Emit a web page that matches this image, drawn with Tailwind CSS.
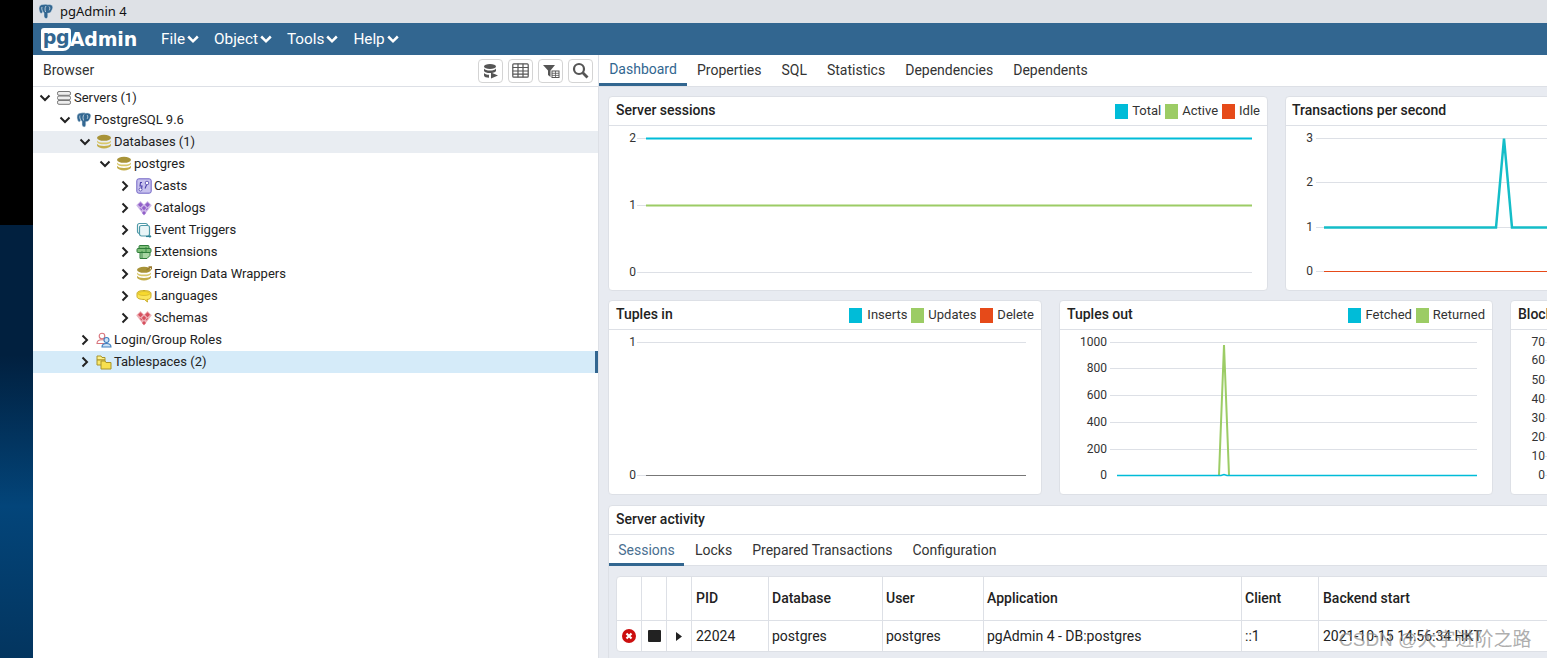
<!DOCTYPE html>
<html lang="en">
<head>
  <meta charset="UTF-8" />
  <title>pgAdmin 4</title>
  <script src="https://cdn.jsdelivr.net/npm/@tailwindcss/browser@4"></script>
</head>
<body class="w-[1547px] h-[658px] overflow-hidden flex bg-white text-[#222] text-[13px] [font-family:Roboto,sans-serif]">
  <!-- shared icons -->
  <svg class="hidden">
    <symbol id="elephant" viewBox="0 0 16 16">
      <path d="M5 1C2.500 1 .8 2.600 1 5.200c.1 1.800.8 4 1.800 4.600.9.5 1.500-.6 2-1.600.4.6.7.9 1.200 1v3.300c0 1.300.9 2.500 2.200 2.500 1.200 0 1.600-1 1.600-2.200V9.600c1.200.4 2.600-.3 3.400-1.600C14.600 5.700 15.300 3.700 14.500 2.500 13.700 1.300 11.500 .7 9.800 1.200 8.600 .7 6.600 .8 5 1Z" fill="#336791" stroke="#dbe6ee" stroke-width=".5"/>
      <path d="M8 2.500C6.800 4 6.800 6.500 7.600 8.500M11 3c1 1 1 2.500.2 3.800M4 3.500c-.6 1.500 0 3.300.8 4.700" fill="none" stroke="#dbe6ee" stroke-width=".8"/>
    </symbol>
    <symbol id="db" viewBox="0 0 16 16">
      <ellipse cx="8" cy="3.800" rx="7" ry="3" fill="#a89338"/>
      <path d="M1 6.400c1 1.700 3.700 2.200 7 2.200s6-.5 7-2.200v1.400c-.6 1.900-3.600 2.500-7 2.500S1.600 9.700 1 7.800Z" fill="#d9c869"/>
      <path d="M1 9.800c1 1.700 3.700 2.200 7 2.200s6-.5 7-2.200v1.800c-.6 1.900-3.600 2.800-7 2.800s-6.400-.9-7-2.800Z" fill="#c4ae4a"/>
    </symbol>
    <symbol id="down" viewBox="0 0 12 12"><path d="M1.500 3.500L6 8l4.500-4.500" fill="none" stroke="#222" stroke-width="2"/></symbol>
    <symbol id="right" viewBox="0 0 12 12"><path d="M3.500 1.500L8 6l-4.500 4.500" fill="none" stroke="#222" stroke-width="2"/></symbol>
    <symbol id="menu-down" viewBox="0 0 12 12"><path d="M1.200 3.500L6 8.300l4.800-4.800" fill="none" stroke="#fff" stroke-width="2.500"/></symbol>
    <symbol id="diamonds" viewBox="0 0 16 16">
      <path d="M4.500 1L8 4.500 11.500 1 15.800 5.300 8 15.500.2 5.300Z" fill="currentColor" opacity=".45"/>
      <path d="M4.500 2.200L7 4.700 4.500 7.200 2 4.700ZM11.500 2.200L14 4.700 11.500 7.200 9 4.700ZM8 5.700L10.300 8 8 10.300 5.700 8ZM4.700 8.200L6.300 9.800 5.700 10.500 3.600 8.600ZM11.300 8.200L9.700 9.800 10.300 10.500 12.400 8.600ZM8 11L10 13 8 15 6 13Z" fill="currentColor"/>
    </symbol>
  </svg>

  <!-- desktop wallpaper strip -->
  <div class="w-[33px] shrink-0 flex flex-col">
    <div class="h-[225px] bg-black"></div>
    <div class="flex-1 bg-linear-to-b from-[#01203f] from-30% via-[#03457a] via-65% to-[#03355f]"></div>
  </div>

  <div class="flex-1 min-w-0 flex flex-col">
    <!-- window title -->
    <div class="h-[23px] bg-[#dee1e6] flex items-center pl-[5px] gap-[6px] text-[13px] text-[#111] [font-family:'Noto_Sans',sans-serif]">
      <svg class="w-[16px] h-[17px]"><use href="#elephant"/></svg>
      <span>pgAdmin 4</span>
    </div>

    <!-- navbar -->
    <div class="h-[32px] bg-[#326690] flex items-center text-white text-[15.3px]">
      <div class="ml-[8px] w-[96px] flex items-center [font-family:'DejaVu_Sans',sans-serif] font-bold text-[19px] leading-none">
        <span class="h-[23px] w-[30px] bg-white rounded-[3px] rounded-br-[8px] text-[#326690] flex items-center justify-center pb-[3px] tracking-[-.5px]">pg</span>
        <span class="ml-[-1px] tracking-[-.2px]">Admin</span>
      </div>
      <div class="ml-[24px] flex gap-[15px]">
        <span class="flex items-center gap-[2px]">File<svg class="w-[12px] h-[12px]"><use href="#menu-down"/></svg></span>
        <span class="flex items-center gap-[2px]">Object<svg class="w-[12px] h-[12px]"><use href="#menu-down"/></svg></span>
        <span class="flex items-center gap-[2px]">Tools<svg class="w-[12px] h-[12px]"><use href="#menu-down"/></svg></span>
        <span class="flex items-center gap-[2px]">Help<svg class="w-[12px] h-[12px]"><use href="#menu-down"/></svg></span>
      </div>
    </div>

    <div class="flex-1 min-h-0 flex">
      <!-- browser panel -->
      <div class="w-[566px] shrink-0 border-r border-[#dde0e6] flex flex-col">
        <div class="h-[32px] border-b border-[#dde0e6] flex items-center pl-[10px] pr-[5px] text-[14px] text-[#333]">
          <span class="flex-1">Browser</span>
          <div class="flex gap-[5px]">
            <span class="w-[25px] h-[24px] border border-[#d4d4d4] rounded-[4px] flex items-center justify-center">
              <svg class="w-[16px] h-[16px]" viewBox="0 0 16 16" fill="#555"><ellipse cx="7" cy="3.500" rx="6" ry="2.500"/><path d="M1 5.500c1 1.500 3 2 6 2s5-.5 6-2V8c-1 1.500-3 2-6 2s-5-.5-6-2ZM1 10c1 1.200 2.500 1.700 5 1.800v3C3.500 14.700 1 14 1 12.500Z"/><path d="M8 9.500L15 12.500 8 15.500Z"/></svg>
            </span>
            <span class="w-[25px] h-[24px] border border-[#d4d4d4] rounded-[4px] flex items-center justify-center">
              <svg class="w-[17px] h-[15px]" viewBox="0 0 17 15" fill="none" stroke="#555" stroke-width="1.200"><rect x=".8" y=".8" width="15.400" height="13.400" rx="1"/><path d="M.8 4.500h15.400M.8 8h15.400M.8 11.200h15.400M6 .8v13.400M11 .8v13.400"/></svg>
            </span>
            <span class="w-[25px] h-[24px] border border-[#d4d4d4] rounded-[4px] flex items-center justify-center">
              <svg class="w-[18px] h-[16px]" viewBox="0 0 18 16"><path d="M1 2h12L8.500 7.500V14L6 12V7.500Z" fill="#555"/><rect x="10" y="8" width="7" height="6.500" fill="#fff" stroke="#555"/><path d="M10 10.300h7M10 12.400h7M13.500 8v6.500" stroke="#555" stroke-width=".8"/></svg>
            </span>
            <span class="w-[25px] h-[24px] border border-[#d4d4d4] rounded-[4px] flex items-center justify-center">
              <svg class="w-[17px] h-[17px]" viewBox="0 0 17 17" fill="none" stroke="#555"><circle cx="7" cy="7" r="5" stroke-width="2.200"/><path d="M10.800 10.800L15.500 15.500" stroke-width="2.800"/></svg>
            </span>
          </div>
        </div>

        <!-- tree -->
        <div class="flex-1">
          <div class="h-[22px] flex items-center gap-[2px] pl-[6px]">
            <svg class="w-[12px] h-[12px] mr-[3px]"><use href="#down"/></svg>
            <svg class="w-[16px] h-[16px]" viewBox="0 0 16 16" fill="#eee" stroke="#777"><rect x="1.500" y="1.500" width="13" height="3.800" rx="1.500"/><rect x="1.500" y="6" width="13" height="3.800" rx="1.500"/><rect x="1.500" y="10.500" width="13" height="3.800" rx="1.500"/></svg>
            <span>Servers (1)</span>
          </div>
          <div class="h-[22px] flex items-center gap-[2px] pl-[26px]">
            <svg class="w-[12px] h-[12px] mr-[3px]"><use href="#down"/></svg>
            <svg class="w-[16px] h-[16px]"><use href="#elephant"/></svg>
            <span>PostgreSQL 9.6</span>
          </div>
          <div class="h-[22px] flex items-center gap-[2px] pl-[46px] bg-[#e9edf2]">
            <svg class="w-[12px] h-[12px] mr-[3px]"><use href="#down"/></svg>
            <svg class="w-[16px] h-[16px]"><use href="#db"/></svg>
            <span>Databases (1)</span>
          </div>
          <div class="h-[22px] flex items-center gap-[2px] pl-[66px]">
            <svg class="w-[12px] h-[12px] mr-[3px]"><use href="#down"/></svg>
            <svg class="w-[16px] h-[16px]"><use href="#db"/></svg>
            <span>postgres</span>
          </div>
          <div class="h-[22px] flex items-center gap-[2px] pl-[86px]">
            <svg class="w-[12px] h-[12px] mr-[3px]"><use href="#right"/></svg>
            <svg class="w-[16px] h-[16px]" viewBox="0 0 16 16"><rect x=".8" y=".8" width="14.400" height="14.400" rx="2" fill="#c8c2ee" stroke="#6f62c4"/><path d="M6 4.500H4.500L4 8h2l-.5 3M9 10.500l1.500-3.500" fill="none" stroke="#4a3fa8" stroke-width="1.100"/><circle cx="11" cy="5" r="1.800" fill="#fff" stroke="#4a3fa8" stroke-width=".8"/><circle cx="4.500" cy="11.500" r="1.500" fill="#fff" stroke="#4a3fa8" stroke-width=".8"/></svg>
            <span>Casts</span>
          </div>
          <div class="h-[22px] flex items-center gap-[2px] pl-[86px]">
            <svg class="w-[12px] h-[12px] mr-[3px]"><use href="#right"/></svg>
            <svg class="w-[16px] h-[16px] text-[#9160c9]"><use href="#diamonds"/></svg>
            <span>Catalogs</span>
          </div>
          <div class="h-[22px] flex items-center gap-[2px] pl-[86px]">
            <svg class="w-[12px] h-[12px] mr-[3px]"><use href="#right"/></svg>
            <svg class="w-[16px] h-[16px]" viewBox="0 0 16 16" fill="none" stroke="#4f9aa8" stroke-width="1.200"><rect x="1.500" y="1.500" width="10" height="10" rx="2"/><rect x="3.500" y="3.500" width="10" height="10.500" rx="2" fill="#e9f5f7"/><path d="M10 14.500h5" stroke="#2d8094"/><path d="M13.500 12.500l2 2-2 1.500Z" fill="#2d8094" stroke="none"/></svg>
            <span>Event Triggers</span>
          </div>
          <div class="h-[22px] flex items-center gap-[2px] pl-[86px]">
            <svg class="w-[12px] h-[12px] mr-[3px]"><use href="#right"/></svg>
            <svg class="w-[16px] h-[16px]" viewBox="0 0 16 16" fill="#7fbf7a" stroke="#2f7d3a"><rect x="3" y="1.500" width="10" height="4" rx="1"/><rect x="1" y="4.500" width="14" height="4" rx="1"/><path d="M4 8.500h10v3l-3 3H4Z" fill="#a9d6a3"/><path d="M6 7v7M10 3v5" stroke-width=".8"/></svg>
            <span>Extensions</span>
          </div>
          <div class="h-[22px] flex items-center gap-[2px] pl-[86px]">
            <svg class="w-[12px] h-[12px] mr-[3px]"><use href="#right"/></svg>
            <svg class="w-[16px] h-[16px]" viewBox="0 0 16 16"><use href="#db"/><path d="M10.500 4L15 .8M12.500 .8H15.500V3.500" fill="none" stroke="#9a7a30" stroke-width="1.200"/></svg>
            <span>Foreign Data Wrappers</span>
          </div>
          <div class="h-[22px] flex items-center gap-[2px] pl-[86px]">
            <svg class="w-[12px] h-[12px] mr-[3px]"><use href="#right"/></svg>
            <svg class="w-[16px] h-[16px]" viewBox="0 0 16 16"><path d="M8 2.500c3.800 0 7 1 7 3v3c0 2-2 3-4 3l.5 2.500-3-2.500C4 11.500 1 10.500 1 8.500v-3c0-2 3.200-3 7-3Z" fill="#fbe55a" stroke="#c9ab23"/><ellipse cx="8" cy="5.500" rx="6" ry="2" fill="#f7d92e" stroke="#c9ab23" stroke-width=".6"/></svg>
            <span>Languages</span>
          </div>
          <div class="h-[22px] flex items-center gap-[2px] pl-[86px]">
            <svg class="w-[12px] h-[12px] mr-[3px]"><use href="#right"/></svg>
            <svg class="w-[16px] h-[16px] text-[#d6515f]"><use href="#diamonds"/></svg>
            <span>Schemas</span>
          </div>
          <div class="h-[22px] flex items-center gap-[2px] pl-[46px]">
            <svg class="w-[12px] h-[12px] mr-[3px]"><use href="#right"/></svg>
            <svg class="w-[16px] h-[16px]" viewBox="0 0 16 16" fill="#fff"><circle cx="6" cy="4" r="2.800" stroke="#d8747c" stroke-width="1.100"/><path d="M1 11.500c0-2.500 2-3.800 5-3.800s5 1.300 5 3.800Z" stroke="#d8747c" stroke-width="1.100"/><circle cx="10.500" cy="8" r="2.500" fill="#cfe3f5" stroke="#3f7fc0" stroke-width="1.100"/><path d="M6 15c0-2.500 2-3.500 4.500-3.500S15 12.500 15 15Z" fill="#cfe3f5" stroke="#3f7fc0" stroke-width="1.100"/></svg>
            <span>Login/Group Roles</span>
          </div>
          <div class="h-[22px] flex items-center gap-[2px] pl-[46px] bg-[#d5ebf9] border-r-[3px] border-[#326690]">
            <svg class="w-[12px] h-[12px] mr-[3px]"><use href="#right"/></svg>
            <svg class="w-[16px] h-[16px]" viewBox="0 0 16 16" stroke="#a8942a"><path d="M1 2h4l1 1.500h3V6H1Z" fill="#fdf08a"/><path d="M1 6h8v5H1Z" fill="#fbe96b"/><path d="M5 7h4l1 1.500h5V15H5Z" fill="#f7e04e"/></svg>
            <span>Tablespaces (2)</span>
          </div>
        </div>
      </div>

      <!-- dashboard panel -->
      <div class="flex-1 min-w-0 flex flex-col overflow-hidden bg-[#e8ebf1]">
        <div class="h-[32px] shrink-0 bg-white border-b border-[#dde0e6] flex text-[14px] text-[#333]">
          <span class="w-[88px] h-[31px] border-b-[3px] border-[#326690] text-[#326690] flex items-center justify-center">Dashboard</span>
          <span class="flex items-center ml-[10px]">Properties</span>
          <span class="flex items-center ml-[20px]">SQL</span>
          <span class="flex items-center ml-[20px]">Statistics</span>
          <span class="flex items-center ml-[20px]">Dependencies</span>
          <span class="flex items-center ml-[20px]">Dependents</span>
        </div>

        <div class="flex-1 pl-[9px] pt-[9px] flex flex-col w-[1200px]">
          <!-- row 1 -->
          <div class="flex gap-[17px] w-[1100px]">
            <div class="w-[660px] h-[195px] shrink-0 bg-white border border-[#dde0e6] rounded-[4px]">
              <div class="h-[29px] border-b border-[#dde0e6] flex items-center px-[7px]">
                <span class="flex-1 mb-[2px] font-medium text-[14px]">Server sessions</span>
                <span class="flex items-center gap-[4px] text-[#333]"><i class="w-[13px] h-[15px] bg-[#00bcd8]"></i>Total</span>
                <span class="flex items-center gap-[4px] ml-[4px] text-[#333]"><i class="w-[13px] h-[15px] bg-[#9ccc65]"></i>Active</span>
                <span class="flex items-center gap-[4px] ml-[4px] text-[#333]"><i class="w-[13px] h-[15px] bg-[#e64a19]"></i>Idle</span>
              </div>
              <svg class="block" width="658" height="164" font-size="12" fill="#333">
                <path d="M28 12.500H643M28 79.500H643M28 146.500H643" stroke="#dde0e6"/>
                <text x="27" y="16" text-anchor="end">2</text><text x="27" y="83" text-anchor="end">1</text><text x="27" y="150" text-anchor="end">0</text>
                <path d="M37 12.500H643" stroke="#00bcd8" stroke-width="2"/>
                <path d="M37 79.500H643" stroke="#9ccc65" stroke-width="2"/>
              </svg>
            </div>
            <div class="w-[400px] h-[195px] shrink-0 bg-white border border-[#dde0e6] rounded-[4px]">
              <div class="h-[29px] border-b border-[#dde0e6] flex items-center px-[6px] pb-[2px]">
                <span class="font-medium text-[14px]">Transactions per second</span>
              </div>
              <svg class="block" width="398" height="164" font-size="12" fill="#333">
                <path d="M30 12.500H398M30 56.500H398M30 101.500H398M30 145.500H398" stroke="#dde0e6"/>
                <text x="27" y="16" text-anchor="end">3</text><text x="27" y="60" text-anchor="end">2</text><text x="27" y="105" text-anchor="end">1</text><text x="27" y="149" text-anchor="end">0</text>
                <path d="M38 145.500H398" stroke="#e64a19"/>
                <path d="M38 101.500H210L218 12.500 226 101.500H398" fill="none" stroke="#14bdc8" stroke-width="2.500"/>
              </svg>
            </div>
          </div>

          <!-- row 2 -->
          <div class="flex gap-[17px] w-[1100px] mt-[9px]">
            <div class="w-[434px] h-[195px] shrink-0 bg-white border border-[#dde0e6] rounded-[4px]">
              <div class="h-[29px] border-b border-[#dde0e6] flex items-center px-[7px]">
                <span class="flex-1 mb-[2px] font-medium text-[14px]">Tuples in</span>
                <span class="flex items-center gap-[5px] text-[#333]"><i class="w-[13px] h-[15px] bg-[#00bcd8]"></i>Inserts</span>
                <span class="flex items-center gap-[4px] ml-[4px] text-[#333]"><i class="w-[13px] h-[15px] bg-[#9ccc65]"></i>Updates</span>
                <span class="flex items-center gap-[4px] ml-[4px] text-[#333]"><i class="w-[13px] h-[15px] bg-[#e64a19]"></i>Delete</span>
              </div>
              <svg class="block" width="432" height="164" font-size="12" fill="#333">
                <path d="M28 12.500H417M28 145.500H37" stroke="#dde0e6"/>
                <text x="27" y="16" text-anchor="end">1</text><text x="27" y="149" text-anchor="end">0</text>
                <path d="M37 145.500H417" stroke="#777"/>
              </svg>
            </div>
            <div class="w-[434px] h-[195px] shrink-0 bg-white border border-[#dde0e6] rounded-[4px]">
              <div class="h-[29px] border-b border-[#dde0e6] flex items-center px-[7px]">
                <span class="flex-1 mb-[2px] font-medium text-[14px]">Tuples out</span>
                <span class="flex items-center gap-[4px] text-[#333]"><i class="w-[13px] h-[15px] bg-[#00bcd8]"></i>Fetched</span>
                <span class="flex items-center gap-[4px] ml-[4px] text-[#333]"><i class="w-[13px] h-[15px] bg-[#9ccc65]"></i>Returned</span>
              </div>
              <svg class="block" width="432" height="164" font-size="12" fill="#333">
                <path d="M50 12.500H417M50 38.500H417M50 65.500H417M50 92.500H417M50 119.500H417" stroke="#dde0e6"/>
                <g text-anchor="end"><text x="47" y="16">1000</text><text x="47" y="42">800</text><text x="47" y="69">600</text><text x="47" y="96">400</text><text x="47" y="123">200</text><text x="47" y="149">0</text></g>
                <path d="M159 145L164 15 169 145" fill="none" stroke="#9ccc65" stroke-width="2"/>
                <path d="M57 145.500H161L164 144.500 167 145.500H417" fill="none" stroke="#00bcd8" stroke-width="1.500"/>
              </svg>
            </div>
            <div class="w-[200px] h-[195px] shrink-0 bg-white border border-[#dde0e6] rounded-[4px]">
              <div class="h-[29px] border-b border-[#dde0e6] flex items-center px-[7px] pb-[2px]">
                <span class="font-medium text-[14px]">Block I/O</span>
              </div>
              <svg class="block" width="198" height="164" font-size="12" fill="#333">
                <g text-anchor="end"><text x="34" y="16">70</text><text x="34" y="34">60</text><text x="34" y="54">50</text><text x="34" y="73">40</text><text x="34" y="92">30</text><text x="34" y="111">20</text><text x="34" y="130">10</text><text x="34" y="149">0</text></g>
                <path d="M34 12.500H40M34 30.500H40M34 50.500H40M34 69.500H40M34 88.500H40M34 107.500H40M34 126.500H40M34 145.500H40" stroke="#dde0e6"/>
              </svg>
            </div>
          </div>

          <!-- server activity -->
          <div class="w-[1100px] h-[200px] mt-[10px] shrink-0 bg-white border border-[#dde0e6] rounded-[4px]">
            <div class="h-[29px] border-b border-[#dde0e6] flex items-center px-[7px] pb-[2px] font-medium text-[14px]">Server activity</div>
            <div class="h-[31px] pt-[1px] border-b border-[#dde0e6] flex text-[14px] text-[#333]">
              <span class="w-[75px] h-[30px] pt-[2px] border-b-[3px] border-[#326690] text-[#4a6f90] flex items-center justify-center">Sessions</span>
              <span class="flex items-center ml-[11px]">Locks</span>
              <span class="flex items-center ml-[20px]">Prepared Transactions</span>
              <span class="flex items-center ml-[20px]">Configuration</span>
            </div>
            <div class="bg-[#e8ebf1] pl-[7px] pr-[8px] pt-[10px] pb-[6px]">
              <div class="bg-white rounded-[4px] border border-[#dde0e6] text-[14px]">
                <div class="h-[44px] border-b border-[#dde0e6] grid grid-cols-[25px_25px_25px_77px_114px_101px_258px_77px_1fr] items-stretch font-medium">
                  <span class="border-r border-[#dde0e6]"></span>
                  <span class="border-r border-[#dde0e6]"></span>
                  <span class="border-r border-[#dde0e6]"></span>
                  <span class="border-r border-[#dde0e6] pl-[4px] flex items-center">PID</span>
                  <span class="border-r border-[#dde0e6] pl-[3px] flex items-center">Database</span>
                  <span class="border-r border-[#dde0e6] pl-[3px] flex items-center">User</span>
                  <span class="border-r border-[#dde0e6] pl-[3px] flex items-center">Application</span>
                  <span class="border-r border-[#dde0e6] pl-[3px] flex items-center">Client</span>
                  <span class="pl-[4px] flex items-center">Backend start</span>
                </div>
                <div class="h-[30px] grid grid-cols-[25px_25px_25px_77px_114px_101px_258px_77px_1fr] items-stretch">
                  <span class="border-r border-[#dde0e6] flex items-center justify-center">
                    <svg class="w-[14px] h-[14px]" viewBox="0 0 14 14"><circle cx="7" cy="7" r="7" fill="#cc0f0f"/><path d="M4.500 4.500l5 5M9.500 4.500l-5 5" stroke="#fff" stroke-width="2.200"/></svg>
                  </span>
                  <span class="border-r border-[#dde0e6] flex items-center justify-center"><i class="w-[13px] h-[12px] bg-[#222] rounded-[1px]"></i></span>
                  <span class="border-r border-[#dde0e6] flex items-center justify-center">
                    <svg class="w-[6px] h-[9px]" viewBox="0 0 6 9"><path d="M0 0l6 4.500L0 9Z" fill="#222"/></svg>
                  </span>
                  <span class="border-r border-[#dde0e6] pl-[4px] flex items-center">22024</span>
                  <span class="border-r border-[#dde0e6] pl-[3px] flex items-center">postgres</span>
                  <span class="border-r border-[#dde0e6] pl-[3px] flex items-center">postgres</span>
                  <span class="border-r border-[#dde0e6] pl-[3px] flex items-center">pgAdmin 4 - DB:postgres</span>
                  <span class="border-r border-[#dde0e6] pl-[3px] flex items-center">::1</span>
                  <span class="pl-[4px] flex items-center">2021-10-15 14:56:34 HKT</span>
                </div>
              </div>
            </div>
          </div>
        </div>
      </div>
    </div>
  </div>

  <!-- image watermark -->
  <span class="absolute left-[1339px] top-[626px] text-[19px] leading-[28px] text-[#8a8a8a]/70 [font-family:'Liberation_Sans','Noto_Sans_CJK_SC',sans-serif]">CSDN @大宇进阶之路</span>
</body>
</html>
